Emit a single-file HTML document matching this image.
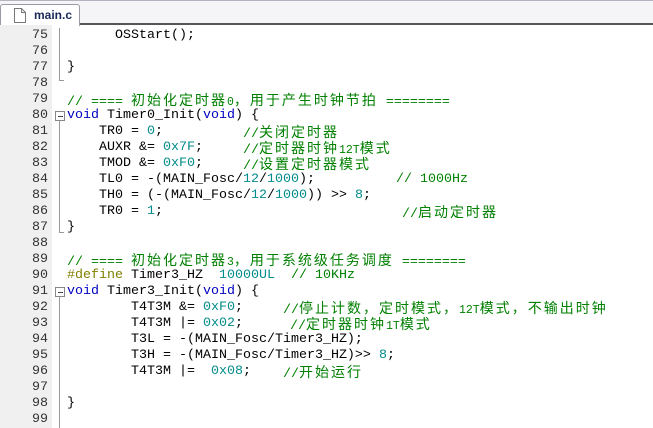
<!DOCTYPE html>
<html><head><meta charset="utf-8"><style>
body{margin:0;width:653px;height:428px;overflow:hidden;background:#fff;position:relative;font-family:"Liberation Mono",monospace;}
.bar{position:absolute;left:0;top:0;width:653px;height:25px;background:#f5f5f7;border-top:1px solid #b4b4c0;border-bottom:2px solid #555;box-sizing:border-box;}
.tab{position:absolute;left:0;top:3px;width:80px;height:22px;background:#fff;border:1px solid #9a9aa6;border-bottom:none;border-radius:3px 3px 0 0;box-sizing:border-box;}
.tab span{position:absolute;left:33px;top:3px;font:bold 12px "Liberation Sans",sans-serif;color:#1a2a5a;}
.gut{position:absolute;left:0;top:25px;width:52px;height:403px;background:#f0f0f0;}
.l{position:absolute;left:0;height:16px;line-height:16px;font-size:13.33px;white-space:pre;color:#000;}
.n{position:absolute;left:0;width:48px;text-align:right;color:#333;}
.c{position:absolute;left:67px;}
.cm{position:absolute;color:#008000;}
.z{font-family:"Noto Sans CJK SC",sans-serif;font-size:14px;letter-spacing:2px;}
.s{font-size:11.5px;}
.k{color:#0000c0}.d{color:#008b8b}.p{color:#808000}
.fl{position:absolute;background:#999;width:1px;left:59px;}
.box{position:absolute;left:55px;width:8px;height:8px;border:1px solid #888;background:#fff;}
.box:after{content:"";position:absolute;left:2px;top:4px;width:5px;height:1px;background:#444;}
</style></head><body>
<div class="bar"><div class="tab"><svg style="position:absolute;left:13px;top:3px" width="12" height="15"><path d="M0.5 0.5h7l4 4v10h-11z" fill="#fff" stroke="#777"/><path d="M7.5 0.5v4h4" fill="none" stroke="#777"/></svg><span>main.c</span></div></div>
<div class="gut"></div>
<div class="fl" style="top:28px;height:52px"></div><div class="fl" style="top:80px;height:1px;width:5px"></div>
<div class="box" style="top:111px"></div>
<div class="fl" style="top:121px;height:112px"></div><div class="fl" style="top:232px;height:1px;width:5px"></div>
<div class="box" style="top:287px"></div>
<div class="fl" style="top:297px;height:131px"></div>

<div class="l" style="top:28px"><span class="n">75</span><span class="c">      OSStart();</span></div>
<div class="l" style="top:44px"><span class="n">76</span></div>
<div class="l" style="top:60px"><span class="n">77</span><span class="c">}</span></div>
<div class="l" style="top:76px"><span class="n">78</span></div>
<div class="l" style="top:92px"><span class="n">79</span><span class="cm" style="left:67px">// ==== <span class="z">初始化定时器</span><span class="s">0</span><span class="z">，用于产生时钟节拍</span> ========</span></div>
<div class="l" style="top:108px"><span class="n">80</span><span class="c"><span class="k">void</span> Timer0_Init(<span class="k">void</span>) {</span></div>
<div class="l" style="top:124px"><span class="n">81</span><span class="c">    TR0 = <span class="d">0</span>;</span><span class="cm" style="left:243px">//<span class="z">关闭定时器</span></span></div>
<div class="l" style="top:140px"><span class="n">82</span><span class="c">    AUXR &amp;= <span class="d">0x7F</span>;</span><span class="cm" style="left:243px">//<span class="z">定时器时钟</span><span class="s">12T</span><span class="z">模式</span></span></div>
<div class="l" style="top:156px"><span class="n">83</span><span class="c">    TMOD &amp;= <span class="d">0xF0</span>;</span><span class="cm" style="left:243px">//<span class="z">设置定时器模式</span></span></div>
<div class="l" style="top:172px"><span class="n">84</span><span class="c">    TL0 = -(MAIN_Fosc/<span class="d">12</span>/<span class="d">1000</span>);</span><span class="cm" style="left:396px">// 1000Hz</span></div>
<div class="l" style="top:188px"><span class="n">85</span><span class="c">    TH0 = (-(MAIN_Fosc/<span class="d">12</span>/<span class="d">1000</span>)) &gt;&gt; <span class="d">8</span>;</span></div>
<div class="l" style="top:204px"><span class="n">86</span><span class="c">    TR0 = <span class="d">1</span>;</span><span class="cm" style="left:402px">//<span class="z">启动定时器</span></span></div>
<div class="l" style="top:220px"><span class="n">87</span><span class="c">}</span></div>
<div class="l" style="top:236px"><span class="n">88</span></div>
<div class="l" style="top:252px"><span class="n">89</span><span class="cm" style="left:67px">// ==== <span class="z">初始化定时器</span><span class="s">3</span><span class="z">，用于系统级任务调度</span> ========</span></div>
<div class="l" style="top:268px"><span class="n">90</span><span class="c"><span class="p">#define</span> Timer3_HZ  <span class="d">10000UL</span>  <span style="color:#008000">// 10KHz</span></span></div>
<div class="l" style="top:284px"><span class="n">91</span><span class="c"><span class="k">void</span> Timer3_Init(<span class="k">void</span>) {</span></div>
<div class="l" style="top:300px"><span class="n">92</span><span class="c">        T4T3M &amp;= <span class="d">0xF0</span>;</span><span class="cm" style="left:283px">//<span class="z">停止计数，定时模式，</span><span class="s">12T</span><span class="z">模式，不输出时钟</span></span></div>
<div class="l" style="top:316px"><span class="n">93</span><span class="c">        T4T3M |= <span class="d">0x02</span>;</span><span class="cm" style="left:290px">//<span class="z">定时器时钟</span><span class="s">1T</span><span class="z">模式</span></span></div>
<div class="l" style="top:332px"><span class="n">94</span><span class="c">        T3L = -(MAIN_Fosc/Timer3_HZ);</span></div>
<div class="l" style="top:348px"><span class="n">95</span><span class="c">        T3H = -(MAIN_Fosc/Timer3_HZ)&gt;&gt; <span class="d">8</span>;</span></div>
<div class="l" style="top:364px"><span class="n">96</span><span class="c">        T4T3M |=  <span class="d">0x08</span>;</span><span class="cm" style="left:283px">//<span class="z">开始运行</span></span></div>
<div class="l" style="top:380px"><span class="n">97</span></div>
<div class="l" style="top:396px"><span class="n">98</span><span class="c">}</span></div>
<div class="l" style="top:412px"><span class="n">99</span></div>
</body></html>
